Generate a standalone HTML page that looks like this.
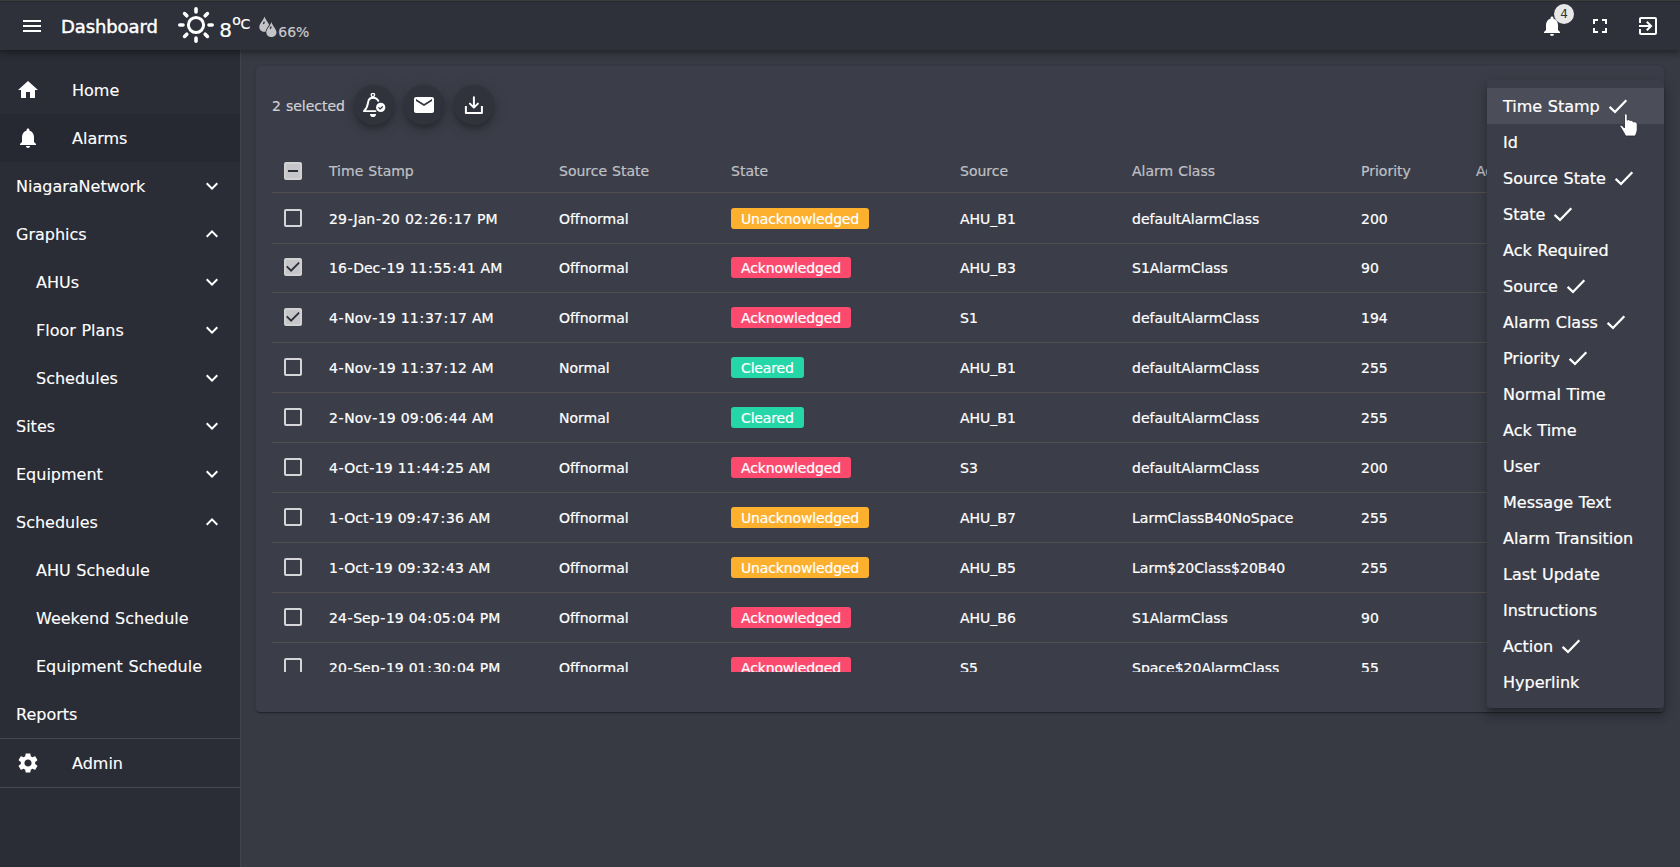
<!DOCTYPE html>
<html lang="en">
<head>
<meta charset="utf-8">
<title>Dashboard</title>
<style>
*{box-sizing:border-box;margin:0;padding:0}
html,body{width:1680px;height:867px;overflow:hidden}
body{background:#373943;font-family:"DejaVu Sans","Liberation Sans",sans-serif;color:#fff;position:relative;word-spacing:.034em;-webkit-text-stroke:.22px currentColor}
svg{display:block}
.topline{position:absolute;left:0;top:0;width:1680px;height:2px;background:#292929;border-top:1px solid #3b3c40;z-index:6}
.appbar{position:absolute;left:0;top:2px;width:1680px;height:48px;background:#2e303a;box-shadow:0 2px 4px -1px rgba(0,0,0,.2),0 4px 5px 0 rgba(0,0,0,.14),0 1px 10px 0 rgba(0,0,0,.12);z-index:5}
.appbar .ic{position:absolute;fill:#fff}
.title{position:absolute;left:61px;top:1px;height:48px;line-height:48px;font-size:18px;letter-spacing:-.1px;-webkit-text-stroke:.45px #fff}
.wx{position:absolute;line-height:1;white-space:nowrap}
.badge{-webkit-text-stroke:0;position:absolute;left:1554px;top:2px;width:20px;height:20px;border-radius:50%;background:#e8e8e8;color:#333;font-size:12px;line-height:20px;text-align:center}
.side{position:absolute;left:0;top:50px;width:241px;height:817px;background:#2a2c36;border-right:1px solid #41434d;z-index:2}
.nav{-webkit-text-stroke:.12px currentColor;position:absolute;left:0;width:240px;height:48px;line-height:50px;font-size:16px;padding-left:16px;white-space:nowrap}
.nav.sub{padding-left:36px}
.nav.act{background:#262832}
.nav .ni{position:absolute;left:16px;top:12px;fill:#fff}
.nav.icn{padding-left:72px}
.nav .chev{position:absolute;left:200px;top:12px;fill:#fff}
.dv{position:absolute;left:0;width:240px;height:1px;background:#454751}
.card{position:absolute;left:256px;top:66px;width:1408px;height:646px;background:#3b3d48;border-radius:4px;box-shadow:0 2px 1px -1px rgba(0,0,0,.2),0 1px 1px 0 rgba(0,0,0,.14),0 1px 3px 0 rgba(0,0,0,.12)}
.sel{position:absolute;left:16px;top:28px;font-size:14px;line-height:24px;color:#d0d0d4}
.fab{position:absolute;top:19px;width:40px;height:40px;border-radius:50%;background:#30323c;box-shadow:0 3px 5px -1px rgba(0,0,0,.2),0 6px 10px 0 rgba(0,0,0,.14),0 1px 18px 0 rgba(0,0,0,.12)}
.fab svg{position:absolute;left:8px;top:8px;fill:#fff}
.tbl{position:absolute;left:16px;top:84px;width:1376px;height:522px;overflow:hidden;font-size:14px}
.row{position:absolute;left:0;width:1376px;height:50px;border-bottom:1px solid #514f4d;white-space:nowrap}
.row.hd{height:43px;color:#bfc0c5}
.row span{position:absolute;top:50%;margin-top:-12px;line-height:24px;height:24px}
.c1{left:57px}.c2{left:287px}.c3{left:459px}.c4{left:688px}.c5{left:860px}.c6{left:1089px}.c7{left:1204px}
.ts i{font-style:normal;margin:0 .65px}.ts b{font-weight:normal;margin:0 .82px}
.cb{position:absolute;left:12px;top:50%;margin-top:-9.500px;width:18px;height:18px;border:2px solid #d6d6d9;border-radius:2px}
.cb.on{background:#c6c6c9;border-color:#d2d2d5}
.chip{position:absolute;left:459px;top:50%;margin-top:-11px;height:21px;line-height:22px;letter-spacing:-.15px;border-radius:3px;padding:0 10px;font-size:14px;color:#fff}
.un{background:#fcb02d}.ak{background:#fb4a6e}.cl{background:#24d6a8}
.menu{position:absolute;left:1487px;top:80px;width:177px;height:628px;background:#3b3d48;border-radius:4px;box-shadow:0 5px 5px -3px rgba(0,0,0,.2),0 8px 10px 1px rgba(0,0,0,.14),0 3px 14px 2px rgba(0,0,0,.12);z-index:8;padding-top:8px}
.mi{height:36px;line-height:38px;padding-left:16px;font-size:16px;white-space:nowrap;position:relative}
.mi.hov{background:#4b4d58}
.mi svg{display:inline-block;vertical-align:top;margin-left:8px;margin-top:10px}
.r1 span{margin-top:-11px}.r1 .chip{margin-top:-10px}.r1 .ts{letter-spacing:.1px}.r2 .cb{margin-top:-10px}.r1 .cb,.hd .cb{margin-top:-9px}
</style>
</head>
<body>
<div class="topline"></div>
<div class="appbar">
<svg class="ic" style="left:20px;top:12px" width="24" height="24" viewBox="0 0 24 24"><path d="M3 18h18v-2H3v2zm0-5h18v-2H3v2zm0-7v2h18V6H3z"/></svg>
<div class="title">Dashboard</div>
<svg class="ic" style="left:176px;top:2.600px" width="40" height="40" viewBox="-20 -20 40 40"><circle cx="0" cy="0" r="7.600" fill="none" stroke="#fff" stroke-width="3"/><g stroke="#fff" stroke-width="3.600" stroke-linecap="round"><path d="M0-13V-16.200M0 13V16.200M-13 0H-16.200M13 0H16.200M9.200-9.200L11.450-11.450M-9.200-9.200L-11.450-11.450M9.200 9.200L11.450 11.450M-9.200 9.200L-11.450 11.450"/></g></svg>
<div class="wx" style="left:219.300px;top:18.100px;font-size:20px">8</div><div class="wx" style="left:232.200px;top:10.700px;font-size:14px">o</div><div class="wx" style="left:240.600px;top:15.200px;font-size:14px">C</div>
<svg class="ic" style="left:258px;top:14px" width="20" height="22" viewBox="0 0 20 22"><path d="M6.5 0.6C5.36 4.55 1.30 7.90 1.30 10.94C1.30 13.82 3.59 15.80 6.5 15.80C9.41 15.80 11.70 13.82 11.70 10.94C11.70 7.90 7.64 4.55 6.5 0.6Z" fill="#c4c4c8"/><path d="M13.4 6C12.28 9.90 8.30 13.20 8.30 16.20C8.30 19.05 10.54 21.00 13.4 21.00C16.26 21.00 18.50 19.05 18.50 16.20C18.50 13.20 14.52 9.90 13.4 6Z" fill="#c4c4c8" stroke="#2e303a" stroke-width="1.600"/><path d="M13.4 6C12.28 9.90 8.30 13.20 8.30 16.20C8.30 19.05 10.54 21.00 13.4 21.00C16.26 21.00 18.50 19.05 18.50 16.20C18.50 13.20 14.52 9.90 13.4 6Z" fill="#c4c4c8"/><ellipse cx="5.900" cy="6.900" rx=".75" ry="1.500" transform="rotate(22 5.900 6.900)" fill="#2e303a"/><ellipse cx="12.700" cy="11.700" rx=".75" ry="1.500" transform="rotate(22 12.700 11.700)" fill="#2e303a"/></svg>
<div class="wx" style="left:278.300px;top:23.200px;font-size:14px;color:#c8c8cc">66%</div>
<svg class="ic" style="left:1540px;top:12px" width="24" height="24" viewBox="0 0 24 24"><path d="M12 22c1.1 0 2-.9 2-2h-4c0 1.100.89 2 2 2zm6-6v-5c0-3.070-1.640-5.640-4.500-6.320V4c0-.830-.670-1.500-1.500-1.500s-1.500.670-1.500 1.500v.680C7.630 5.360 6 7.920 6 11v5l-2 2v1h16v-1l-2-2z"/></svg>
<div class="badge">4</div>
<svg class="ic" style="left:1588px;top:12px" width="24" height="24" viewBox="0 0 24 24"><path d="M7 14H5v5h5v-2H7v-3zm-2-4h2V7h3V5H5v5zm12 7h-3v2h5v-5h-2v3zM14 5v2h3v3h2V5h-5z"/></svg>
<svg class="ic" style="left:1636px;top:12px" width="24" height="24" viewBox="0 0 24 24"><path d="M10.090 15.590L11.500 17l5-5-5-5-1.410 1.410L12.670 11H3v2h9.670l-2.580 2.590zM19 3H5c-1.110 0-2 .9-2 2v4h2V5h14v14H5v-4H3v4c0 1.100.89 2 2 2h14c1.100 0 2-.9 2-2V5c0-1.100-.9-2-2-2z"/></svg>
</div>
<div class="side">
<div class="nav icn" style="top:16px"><svg class="ni" width="24" height="24" viewBox="0 0 24 24"><path d="M10 20v-6h4v6h5v-8h3L12 3 2 12h3v8z"/></svg>Home</div>
<div class="nav icn act" style="top:64px"><svg class="ni" width="24" height="24" viewBox="0 0 24 24"><path d="M12 22c1.1 0 2-.9 2-2h-4c0 1.100.89 2 2 2zm6-6v-5c0-3.070-1.640-5.640-4.500-6.320V4c0-.830-.670-1.500-1.500-1.500s-1.500.670-1.500 1.500v.680C7.630 5.360 6 7.920 6 11v5l-2 2v1h16v-1l-2-2z"/></svg>Alarms</div>
<div class="nav " style="top:112px">NiagaraNetwork<svg class="chev" width="24" height="24" viewBox="0 0 24 24"><path d="M16.590 8.590L12 13.170 7.410 8.590 6 10l6 6 6-6z"/></svg></div>
<div class="nav " style="top:160px">Graphics<svg class="chev" width="24" height="24" viewBox="0 0 24 24"><path d="M12 8l-6 6 1.410 1.410L12 10.830l4.590 4.580L18 14z"/></svg></div>
<div class="nav sub" style="top:208px">AHUs<svg class="chev" width="24" height="24" viewBox="0 0 24 24"><path d="M16.590 8.590L12 13.170 7.410 8.590 6 10l6 6 6-6z"/></svg></div>
<div class="nav sub" style="top:256px">Floor Plans<svg class="chev" width="24" height="24" viewBox="0 0 24 24"><path d="M16.590 8.590L12 13.170 7.410 8.590 6 10l6 6 6-6z"/></svg></div>
<div class="nav sub" style="top:304px">Schedules<svg class="chev" width="24" height="24" viewBox="0 0 24 24"><path d="M16.590 8.590L12 13.170 7.410 8.590 6 10l6 6 6-6z"/></svg></div>
<div class="nav " style="top:352px">Sites<svg class="chev" width="24" height="24" viewBox="0 0 24 24"><path d="M16.590 8.590L12 13.170 7.410 8.590 6 10l6 6 6-6z"/></svg></div>
<div class="nav " style="top:400px">Equipment<svg class="chev" width="24" height="24" viewBox="0 0 24 24"><path d="M16.590 8.590L12 13.170 7.410 8.590 6 10l6 6 6-6z"/></svg></div>
<div class="nav " style="top:448px">Schedules<svg class="chev" width="24" height="24" viewBox="0 0 24 24"><path d="M12 8l-6 6 1.410 1.410L12 10.830l4.590 4.580L18 14z"/></svg></div>
<div class="nav sub" style="top:496px">AHU Schedule</div>
<div class="nav sub" style="top:544px">Weekend Schedule</div>
<div class="nav sub" style="top:592px">Equipment Schedule</div>
<div class="nav " style="top:640px">Reports</div>
<div class="dv" style="top:688px"></div>
<div class="nav icn" style="top:689px"><svg class="ni" width="24" height="24" viewBox="0 0 24 24"><path d="M19.140 12.940c.040-.3.060-.610.060-.940 0-.320-.020-.640-.070-.940l2.030-1.580c.180-.140.230-.410.120-.610l-1.920-3.320c-.120-.220-.370-.290-.590-.220l-2.390.960c-.5-.380-1.030-.7-1.620-.940l-.360-2.540c-.040-.240-.240-.410-.480-.410h-3.840c-.240 0-.430.170-.470.410l-.360 2.540c-.590.240-1.130.570-1.620.940l-2.390-.960c-.220-.080-.470 0-.590.220L2.740 8.870c-.120.210-.080.470.120.610l2.030 1.580c-.050.3-.090.630-.090.940s.020.640.070.940l-2.030 1.580c-.180.140-.230.410-.120.610l1.920 3.320c.120.220.370.290.590.220l2.390-.960c.5.380 1.030.7 1.620.940l.360 2.540c.050.240.240.410.480.410h3.840c.240 0 .440-.170.470-.410l.360-2.540c.590-.240 1.130-.560 1.620-.940l2.390.960c.220.080.470 0 .590-.220l1.920-3.320c.120-.220.070-.470-.120-.610l-2.010-1.580zM12 15.600c-1.980 0-3.600-1.620-3.600-3.600s1.620-3.600 3.600-3.600 3.600 1.620 3.600 3.600-1.620 3.600-3.600 3.600z"/></svg>Admin</div>
<div class="dv" style="top:737px"></div>
</div>
<div class="card">
<div class="sel">2 selected</div>
<div class="fab" style="left:98px"><svg width="24" height="24" viewBox="0 0 24 24"><g fill="none" stroke="#fff" stroke-linecap="round" stroke-linejoin="round"><circle cx="10.900" cy="2" r="1.650" stroke-width="1.400"/><path d="M10.900 4.700C8.200 4.700 6.500 6.300 6.100 9.300C5.700 12.600 5.200 15 1.900 18.100H13.500" stroke-width="1.900"/><path d="M10.900 4.700C13.600 4.700 15.500 5.900 16.300 7.900" stroke-width="1.900"/></g><path d="M7.900 21.100H14.100C13.900 23 12.600 24.300 11 24.300S8.100 23 7.900 21.100z"/><circle cx="18.700" cy="14.400" r="4.650"/><path d="M16.500 14.400L18.100 15.900 20.800 13.400" fill="none" stroke="#30323c" stroke-width="1.300"/></svg></div>
<div class="fab" style="left:148px"><svg width="24" height="24" viewBox="0 0 24 24"><path d="M20 4H4c-1.100 0-1.990.9-1.990 2L2 18c0 1.100.9 2 2 2h16c1.100 0 2-.9 2-2V6c0-1.100-.9-2-2-2zm0 4l-8 5-8-5V6l8 5 8-5v2z"/></svg></div>
<div class="fab" style="left:198px"><svg width="24" height="24" viewBox="0 0 24 24"><g fill="none" stroke="#fff" stroke-width="2" stroke-linecap="round" stroke-linejoin="round"><path d="M3.900 13V20H19.900V13" stroke-linecap="butt"/><path d="M11.900 4.200V14.500M7.900 10.600L11.900 14.600 15.900 10.600"/></g></svg></div>
<div class="tbl">
<div class="row hd" style="top:0"><div class="cb on"><svg width="18" height="18" viewBox="0 0 18 18" style="position:absolute;left:-2px;top:-2px"><path d="M4 9H14" fill="none" stroke="#2b2d37" stroke-width="2"/></svg></div><span class="c1">Time Stamp</span><span class="c2">Source State</span><span class="c3">State</span><span class="c4">Source</span><span class="c5">Alarm Class</span><span class="c6">Priority</span><span class="c7">Action</span></div>
<div class="row r1" style="top:43px;height:51px"><div class="cb"></div><span class="c1 ts">29<i>-</i>Jan<i>-</i>20 02<b>:</b>26<b>:</b>17 PM</span><span class="c2">Offnormal</span><div class="chip un">Unacknowledged</div><span class="c4">AHU_B1</span><span class="c5">defaultAlarmClass</span><span class="c6">200</span></div>
<div class="row r2" style="top:94px;height:49px"><div class="cb on"><svg width="18" height="18" viewBox="0 0 18 18" style="position:absolute;left:-2px;top:-2px"><path d="M2.700 8.300L7.100 12.700 15.100 4.600" fill="none" stroke="#2b2d37" stroke-width="1.800"/></svg></div><span class="c1 ts">16<i>-</i>Dec<i>-</i>19 11<b>:</b>55<b>:</b>41 AM</span><span class="c2">Offnormal</span><div class="chip ak">Acknowledged</div><span class="c4">AHU_B3</span><span class="c5">S1AlarmClass</span><span class="c6">90</span></div>
<div class="row" style="top:143px;height:50px"><div class="cb on"><svg width="18" height="18" viewBox="0 0 18 18" style="position:absolute;left:-2px;top:-2px"><path d="M2.700 8.300L7.100 12.700 15.100 4.600" fill="none" stroke="#2b2d37" stroke-width="1.800"/></svg></div><span class="c1 ts">4<i>-</i>Nov<i>-</i>19 11<b>:</b>37<b>:</b>17 AM</span><span class="c2">Offnormal</span><div class="chip ak">Acknowledged</div><span class="c4">S1</span><span class="c5">defaultAlarmClass</span><span class="c6">194</span></div>
<div class="row" style="top:193px;height:50px"><div class="cb"></div><span class="c1 ts">4<i>-</i>Nov<i>-</i>19 11<b>:</b>37<b>:</b>12 AM</span><span class="c2">Normal</span><div class="chip cl">Cleared</div><span class="c4">AHU_B1</span><span class="c5">defaultAlarmClass</span><span class="c6">255</span></div>
<div class="row" style="top:243px;height:50px"><div class="cb"></div><span class="c1 ts">2<i>-</i>Nov<i>-</i>19 09<b>:</b>06<b>:</b>44 AM</span><span class="c2">Normal</span><div class="chip cl">Cleared</div><span class="c4">AHU_B1</span><span class="c5">defaultAlarmClass</span><span class="c6">255</span></div>
<div class="row" style="top:293px;height:50px"><div class="cb"></div><span class="c1 ts">4<i>-</i>Oct<i>-</i>19 11<b>:</b>44<b>:</b>25 AM</span><span class="c2">Offnormal</span><div class="chip ak">Acknowledged</div><span class="c4">S3</span><span class="c5">defaultAlarmClass</span><span class="c6">200</span></div>
<div class="row" style="top:343px;height:50px"><div class="cb"></div><span class="c1 ts">1<i>-</i>Oct<i>-</i>19 09<b>:</b>47<b>:</b>36 AM</span><span class="c2">Offnormal</span><div class="chip un">Unacknowledged</div><span class="c4">AHU_B7</span><span class="c5">LarmClassB40NoSpace</span><span class="c6">255</span></div>
<div class="row" style="top:393px;height:50px"><div class="cb"></div><span class="c1 ts">1<i>-</i>Oct<i>-</i>19 09<b>:</b>32<b>:</b>43 AM</span><span class="c2">Offnormal</span><div class="chip un">Unacknowledged</div><span class="c4">AHU_B5</span><span class="c5">Larm$20Class$20B40</span><span class="c6">255</span></div>
<div class="row" style="top:443px;height:50px"><div class="cb"></div><span class="c1 ts">24<i>-</i>Sep<i>-</i>19 04<b>:</b>05<b>:</b>04 PM</span><span class="c2">Offnormal</span><div class="chip ak">Acknowledged</div><span class="c4">AHU_B6</span><span class="c5">S1AlarmClass</span><span class="c6">90</span></div>
<div class="row" style="top:493px;height:50px"><div class="cb"></div><span class="c1 ts">20<i>-</i>Sep<i>-</i>19 01<b>:</b>30<b>:</b>04 PM</span><span class="c2">Offnormal</span><div class="chip ak">Acknowledged</div><span class="c4">S5</span><span class="c5">Space$20AlarmClass</span><span class="c6">55</span></div>
</div>
</div>
<div class="menu">
<div class="mi hov">Time Stamp<svg width="20" height="16" viewBox="0 0 20 16"><path d="M1.600 8.800L7 14 18.300 2.300" fill="none" stroke="#fff" stroke-width="2.300"/></svg></div>
<div class="mi">Id</div>
<div class="mi">Source State<svg width="20" height="16" viewBox="0 0 20 16"><path d="M1.600 8.800L7 14 18.300 2.300" fill="none" stroke="#fff" stroke-width="2.300"/></svg></div>
<div class="mi">State<svg width="20" height="16" viewBox="0 0 20 16"><path d="M1.600 8.800L7 14 18.300 2.300" fill="none" stroke="#fff" stroke-width="2.300"/></svg></div>
<div class="mi">Ack Required</div>
<div class="mi">Source<svg width="20" height="16" viewBox="0 0 20 16"><path d="M1.600 8.800L7 14 18.300 2.300" fill="none" stroke="#fff" stroke-width="2.300"/></svg></div>
<div class="mi">Alarm Class<svg width="20" height="16" viewBox="0 0 20 16"><path d="M1.600 8.800L7 14 18.300 2.300" fill="none" stroke="#fff" stroke-width="2.300"/></svg></div>
<div class="mi">Priority<svg width="20" height="16" viewBox="0 0 20 16"><path d="M1.600 8.800L7 14 18.300 2.300" fill="none" stroke="#fff" stroke-width="2.300"/></svg></div>
<div class="mi">Normal Time</div>
<div class="mi">Ack Time</div>
<div class="mi">User</div>
<div class="mi">Message Text</div>
<div class="mi">Alarm Transition</div>
<div class="mi">Last Update</div>
<div class="mi">Instructions</div>
<div class="mi">Action<svg width="20" height="16" viewBox="0 0 20 16"><path d="M1.600 8.800L7 14 18.300 2.300" fill="none" stroke="#fff" stroke-width="2.300"/></svg></div>
<div class="mi">Hyperlink</div>
</div>
<svg style="position:absolute;left:1618px;top:112px;z-index:9" width="22" height="26" viewBox="0 0 22 26"><path d="M6.500 3.200C6.500 2.300 7.100 1.800 7.850 1.800C8.600 1.800 9.200 2.300 9.200 3.200V8.300C9.600 7.600 10.200 7.400 10.800 7.500C11.500 7.600 12 8 12.200 8.800C12.600 8.300 13.300 8.200 13.900 8.400C14.600 8.600 15.200 9.200 15.300 10C15.700 9.600 16.400 9.600 17 9.800C18.200 10.200 19.200 11 19.200 12.500V17.500C19.200 20 18 22 17.200 24H7.600C6.500 21.500 4.500 18.500 2.200 14.500C1.800 13.800 2 13.200 2.600 13.200C3.800 13.200 5 14.300 6.500 16Z" fill="#fff" stroke="#26272e" stroke-width=".8"/></svg>
</body>
</html>
